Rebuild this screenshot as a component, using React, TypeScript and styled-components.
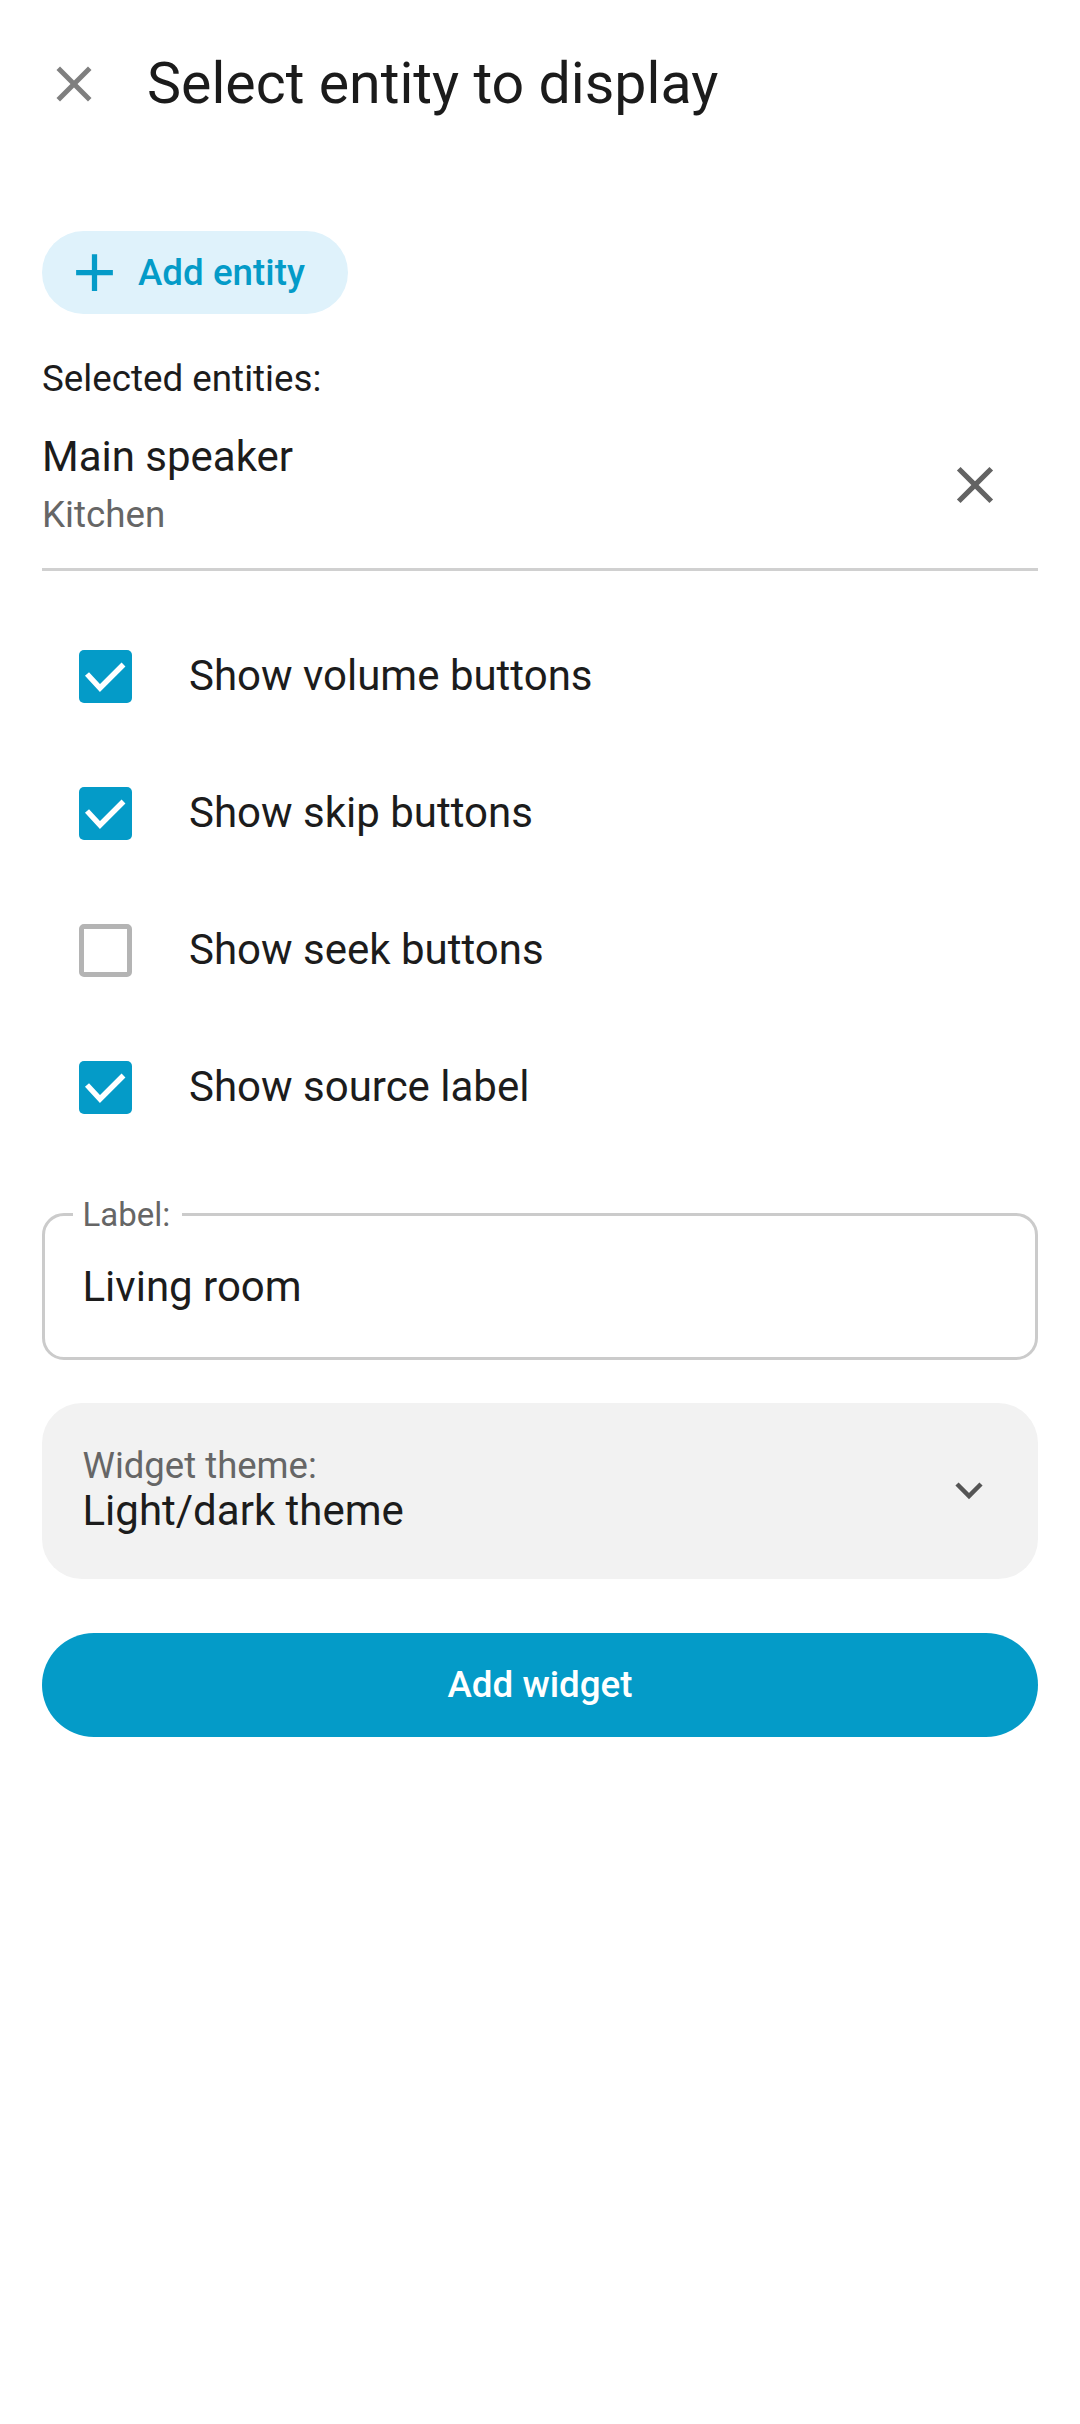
import { FC } from 'react';
import styled, { createGlobalStyle } from 'styled-components';

const PRIMARY = '#049bc8';

const GlobalStyle = createGlobalStyle`
  html, body {
    margin: 0;
    padding: 0;
    background: #fff;
  }
  body {
    font-family: Roboto, 'Noto Sans', Arial, sans-serif;
    color: #1c1c1c;
  }
  * {
    box-sizing: border-box;
  }
`;

type Option = { label: string; checked: boolean };

const options: Option[] = [
  { label: 'Show volume buttons', checked: true },
  { label: 'Show skip buttons', checked: true },
  { label: 'Show seek buttons', checked: false },
  { label: 'Show source label', checked: true },
];

const CloseIcon: FC<{ size: number; color: string }> = ({ size, color }) => (
  <svg width={size} height={size} viewBox="0 0 24 24" fill={color}>
    <path d="M19 6.41 17.59 5 12 10.59 6.41 5 5 6.41 10.59 12 5 17.59 6.41 19 12 13.41 17.59 19 19 17.59 13.41 12z" />
  </svg>
);

const PlusIcon: FC = () => (
  <svg width={63} height={63} viewBox="0 0 24 24" fill={PRIMARY}>
    <path d="M19 13h-6v6h-2v-6H5v-2h6V5h2v6h6v2z" />
  </svg>
);

const Chevron: FC = () => (
  <svg width={30} height={20} viewBox="0 0 30 20" fill="none">
    <polyline points="3,3 15,15 27,3" stroke="#555" strokeWidth={4.5} />
  </svg>
);

const WidgetConfig: FC = () => {
  return (
    <>
      <GlobalStyle />
      <Header>
        <CloseIcon size={60} color="#7f7f7f" />
        <Title>Select entity to display</Title>
      </Header>
      <Content>
        <AddEntityButton type="button">
          <PlusIcon />
          Add entity
        </AddEntityButton>

        <SectionLabel>Selected entities:</SectionLabel>
        <EntityRow>
          <EntityText>
            <EntityName>Main speaker</EntityName>
            <EntityArea>Kitchen</EntityArea>
          </EntityText>
          <RemoveButton type="button" aria-label="Remove">
            <CloseIcon size={62} color="#636363" />
          </RemoveButton>
        </EntityRow>

        <OptionList>
          {options.map((o) => (
            <OptionRow key={o.label}>
              <CheckBox $checked={o.checked}>
                {o.checked && (
                  <svg width={53} height={53} viewBox="0 0 53 53" fill="none">
                    <polyline
                      points="8,24 21,38 44.5,14.5"
                      stroke="#fff"
                      strokeWidth={5.5}
                    />
                  </svg>
                )}
              </CheckBox>
              <OptionLabel>{o.label}</OptionLabel>
            </OptionRow>
          ))}
        </OptionList>

        <LabelField>
          <FieldLegend>Label:</FieldLegend>
          <FieldInput defaultValue="Living room" />
        </LabelField>

        <ThemeSelect>
          <SelectText>
            <SelectLabel>Widget theme:</SelectLabel>
            <SelectValue>Light/dark theme</SelectValue>
          </SelectText>
          <Chevron />
        </ThemeSelect>

        <SubmitButton type="button">Add widget</SubmitButton>
      </Content>
    </>
  );
};

export default WidgetConfig;

const Header = styled.header`
  display: flex;
  align-items: center;
  height: 168px;
  padding-left: 44px;
`;

const Title = styled.h1`
  margin: 0 0 0 43px;
  font-size: 57.3px;
  font-weight: 400;
  line-height: 1;
  color: #1b1b1b;
`;

const Content = styled.main`
  padding: 0 42px;
`;

const AddEntityButton = styled.button`
  display: flex;
  align-items: center;
  gap: 12px;
  width: fit-content;
  height: 83px;
  margin-top: 63px;
  padding: 0 43px 0 21px;
  border: none;
  border-radius: 42px;
  background: #dff2fb;
  color: ${PRIMARY};
  font: 500 36.75px Roboto, sans-serif;
`;

const SectionLabel = styled.div`
  margin-top: 43px;
  font-size: 36.75px;
  line-height: 44px;
`;

const EntityRow = styled.div`
  display: flex;
  align-items: center;
  margin-top: 31px;
  padding-bottom: 30.5px;
  border-bottom: 3px solid #d0d0d0;
`;

const EntityText = styled.div`
  flex: 1;
`;

const EntityName = styled.div`
  font-size: 42px;
  line-height: 50px;
`;

const EntityArea = styled.div`
  margin-top: 11px;
  font-size: 36.75px;
  line-height: 44px;
  color: #666;
`;

const RemoveButton = styled.button`
  display: flex;
  margin-right: 32px;
  padding: 0;
  border: none;
  background: none;
`;

const OptionList = styled.div`
  margin-top: 37px;
`;

const OptionRow = styled.label`
  display: flex;
  align-items: center;
  gap: 57px;
  height: 137px;
  padding-left: 37px;
`;

const CheckBox = styled.span<{ $checked: boolean }>`
  display: flex;
  flex: none;
  width: 53px;
  height: 53px;
  border-radius: 5px;
  background: ${(p) => (p.$checked ? PRIMARY : 'transparent')};
  border: ${(p) => (p.$checked ? 'none' : '5px solid #b4b4b4')};
`;

const OptionLabel = styled.span`
  font-size: 42px;
  line-height: 50px;
`;

const LabelField = styled.fieldset`
  min-width: 0;
  margin: 41px 0 0;
  padding: 0 0 45px 28px;
  border: 3px solid #cbcbcb;
  border-radius: 22px;
`;

const FieldLegend = styled.legend`
  padding: 0 12px 0 9.5px;
  font-size: 33px;
  line-height: 36px;
  color: #666;
`;

const FieldInput = styled.input`
  display: block;
  width: 100%;
  height: 50px;
  margin-top: 29px;
  padding: 0 0 0 9.5px;
  border: none;
  outline: none;
  background: transparent;
  font: 400 42px/50px Roboto, sans-serif;
  color: #1c1c1c;
`;

const ThemeSelect = styled.div`
  display: flex;
  align-items: center;
  height: 176px;
  margin-top: 43px;
  padding: 0 54px 0 40.5px;
  border-radius: 40px;
  background: #f2f2f2;
`;

const SelectText = styled.div`
  flex: 1;
`;

const SelectLabel = styled.div`
  font-size: 36.5px;
  line-height: 40px;
  color: #666;
`;

const SelectValue = styled.div`
  margin-top: 1.6px;
  font-size: 42px;
  line-height: 48px;
`;

const SubmitButton = styled.button`
  display: block;
  width: 100%;
  height: 104px;
  margin-top: 54px;
  border: none;
  border-radius: 52px;
  background: ${PRIMARY};
  color: #fff;
  font: 500 36.75px Roboto, sans-serif;
`;
